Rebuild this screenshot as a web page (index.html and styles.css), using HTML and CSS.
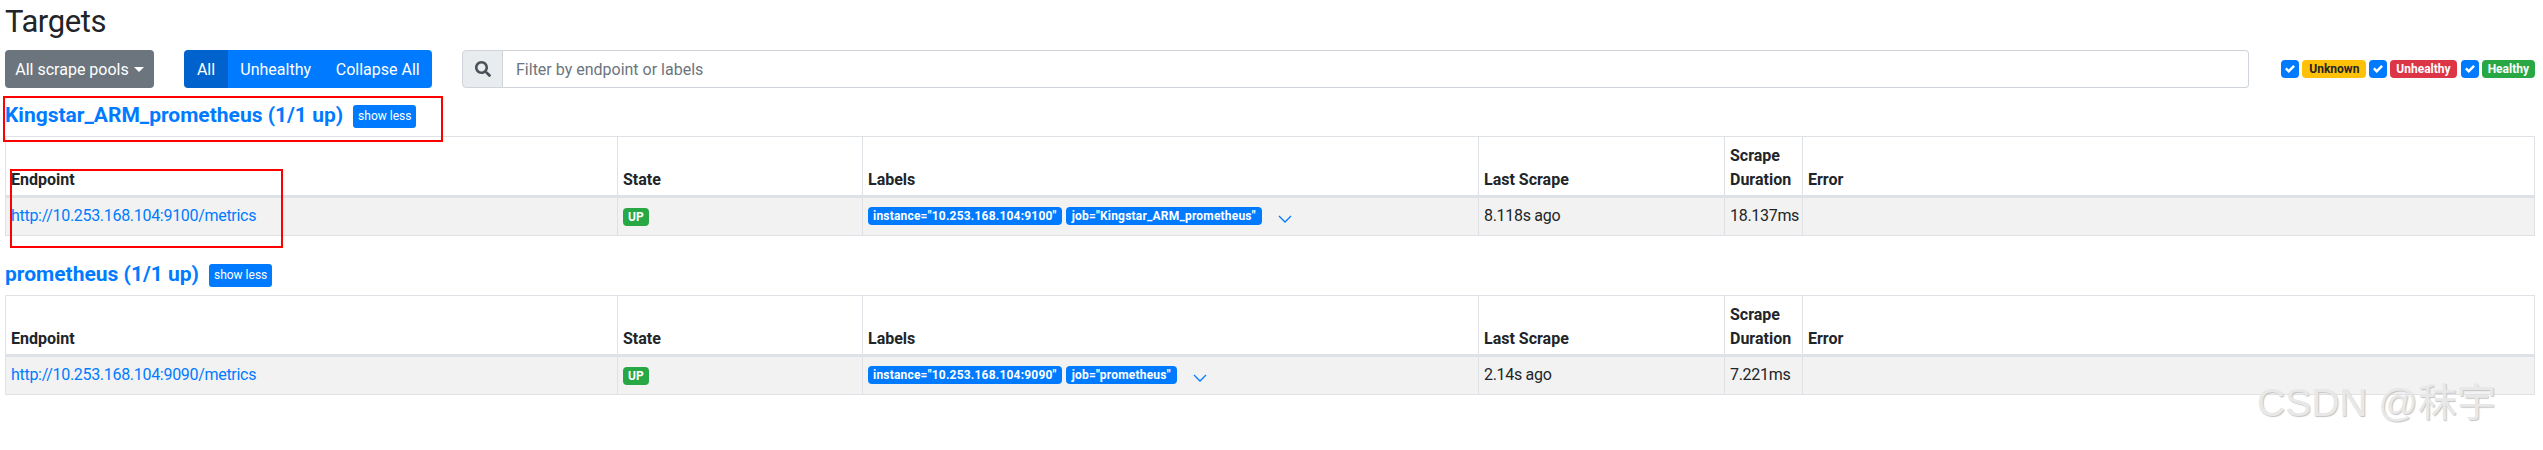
FILE: index.html
```html
<!DOCTYPE html>
<html lang="en">
<head>
<meta charset="utf-8">
<title>Targets</title>
<link rel="stylesheet" href="styles.css">
</head>
<body>
<main class="page">
  <h1 class="title">Targets</h1>
  <div class="toolbar">
    <button class="btn btn-grey">All scrape pools<span class="caret"></span></button>
    <div class="btn-group">
      <button class="btn btn-blue btn-active">All</button>
      <button class="btn btn-blue">Unhealthy</button>
      <button class="btn btn-blue">Collapse All</button>
    </div>
    <div class="search">
      <span class="search-icon">
        <svg width="16" height="16" viewBox="0 0 512 512"><path fill="#495057" d="M505 442.700L405.300 343c-4.500-4.500-10.600-7-17-7H372c27.600-35.300 44-79.700 44-128C416 93.100 322.900 0 208 0S0 93.100 0 208s93.100 208 208 208c48.300 0 92.700-16.400 128-44v16.300c0 6.400 2.500 12.500 7 17l99.700 99.700c9.400 9.400 24.600 9.400 33.900 0l28.300-28.300c9.400-9.400 9.400-24.600.1-34zM208 336c-70.700 0-128-57.200-128-128 0-70.700 57.200-128 128-128 70.700 0 128 57.200 128 128 0 70.700-57.200 128-128 128z"/></svg>
      </span>
      <input class="search-input" type="text" placeholder="Filter by endpoint or labels">
    </div>
    <div class="filters">
      <span class="check"><svg width="10" height="10" viewBox="0 0 8 8"><path fill="#fff" d="M6.564.750l-3.590 3.612-1.538-1.550L0 4.260l2.974 2.990L8 2.193z"/></svg></span>
      <span class="pill pill-yellow">Unknown</span>
      <span class="check"><svg width="10" height="10" viewBox="0 0 8 8"><path fill="#fff" d="M6.564.750l-3.590 3.612-1.538-1.550L0 4.260l2.974 2.990L8 2.193z"/></svg></span>
      <span class="pill pill-red">Unhealthy</span>
      <span class="check"><svg width="10" height="10" viewBox="0 0 8 8"><path fill="#fff" d="M6.564.750l-3.590 3.612-1.538-1.550L0 4.260l2.974 2.990L8 2.193z"/></svg></span>
      <span class="pill pill-green">Healthy</span>
    </div>
  </div>

  <section class="pool pool-first">
    <div class="pool-head">
      <a class="pool-link" href="#a">Kingstar_ARM_prometheus (1/1 up)</a>
      <button class="show-less">show less</button>
    </div>
    <table class="targets">
      <colgroup><col class="c-end"><col class="c-state"><col class="c-labels"><col class="c-last"><col class="c-dur"><col></colgroup>
      <thead><tr><th>Endpoint</th><th>State</th><th>Labels</th><th>Last Scrape</th><th>Scrape Duration</th><th>Error</th></tr></thead>
      <tbody><tr>
        <td><a class="ep" href="#a">http://10.253.168.104:9100/metrics</a></td>
        <td><span class="pill pill-green up">UP</span></td>
        <td><div class="labels"><span class="pill pill-blue">instance="10.253.168.104:9100"</span><span class="pill pill-blue pill-job">job="Kingstar_ARM_prometheus"</span><svg class="chev" width="14" height="8" viewBox="0 0 14 8"><path d="M1 1l6 6 6-6" fill="none" stroke="#007bff" stroke-width="1.300"/></svg></div></td>
        <td>8.118s ago</td><td>18.137ms</td><td></td>
      </tr></tbody>
    </table>
  </section>

  <section class="pool">
    <div class="pool-head">
      <a class="pool-link" href="#b">prometheus (1/1 up)</a>
      <button class="show-less">show less</button>
    </div>
    <table class="targets">
      <colgroup><col class="c-end"><col class="c-state"><col class="c-labels"><col class="c-last"><col class="c-dur"><col></colgroup>
      <thead><tr><th>Endpoint</th><th>State</th><th>Labels</th><th>Last Scrape</th><th>Scrape Duration</th><th>Error</th></tr></thead>
      <tbody><tr>
        <td><a class="ep" href="#b">http://10.253.168.104:9090/metrics</a></td>
        <td><span class="pill pill-green up">UP</span></td>
        <td><div class="labels"><span class="pill pill-blue">instance="10.253.168.104:9090"</span><span class="pill pill-blue pill-job">job="prometheus"</span><svg class="chev" width="14" height="8" viewBox="0 0 14 8"><path d="M1 1l6 6 6-6" fill="none" stroke="#007bff" stroke-width="1.300"/></svg></div></td>
        <td>2.14s ago</td><td>7.221ms</td><td></td>
      </tr></tbody>
    </table>
  </section>
</main>
<div class="mark mark-pool"></div>
<div class="mark mark-endpoint"></div>
<div class="watermark">CSDN @秣宇</div>
</body>
</html>
```
FILE: styles.css
```css
* { box-sizing: border-box; }
html, body { margin: 0; background: #fff; }
body {
  position: relative;
  height: 450px;
  overflow: hidden;
  font-family: Roboto, "Noto Sans", "Liberation Sans", sans-serif;
  font-size: 16px;
  line-height: 24px;
  color: #212529;
}
.page { padding: 0 8px 0 5px; }
.title { margin: 0; height: 50px; font-size: 31px; line-height: 44px; font-weight: 400; letter-spacing: -0.4px; }
.toolbar { display: flex; align-items: center; height: 38px; }
.btn { height: 38px; border: 0; padding: 2px 13px 0; font: inherit; color: #fff; border-radius: 4px; }
.btn-grey { background: #6c757d; width: 149px; padding: 2px 0 0; }
.caret {
  display: inline-block; margin-left: 5px; vertical-align: 3px;
  border-top: 5px solid #fff; border-left: 5px solid transparent; border-right: 5px solid transparent;
}
.btn-group { display: flex; width: 248px; margin-left: 30px; border-radius: 4px; overflow: hidden; }
.btn-blue { flex: 1 1 auto; background: #007bff; border-radius: 0; padding: 2px 12px 0; }
.btn-active { flex: none; width: 44px; padding: 2px 0 0; background: #0062cc; }
.search { display: flex; margin-left: 30px; width: 1787px; height: 38px; }
.search-icon {
  display: flex; align-items: center; justify-content: center; flex: none; width: 41px;
  background: #e9ecef; border: 1px solid #ced4da; border-radius: 4px 0 0 4px;
}
.search-input {
  flex: 1; min-width: 0; border: 1px solid #ced4da; border-left: 0; border-radius: 0 4px 4px 0;
  padding: 2px 13px 0; font: inherit; color: #495057; outline: 0;
}
.search-input::placeholder { color: #6c757d; opacity: 1; }
.filters { display: flex; align-items: center; margin-left: auto; }
.check {
  display: flex; align-items: center; justify-content: center;
  width: 18px; height: 18px; background: #007bff; border-radius: 4px; margin-right: 3px;
}
.pill {
  display: inline-block; height: 18px; padding: 0 6px; border-radius: 4px;
  font-size: 12px; font-weight: 700; line-height: 18px; white-space: nowrap; letter-spacing: 0;
}
.pill-yellow { background: #ffc107; color: #212529; margin-right: 3px; padding: 0 7px; }
.pill-red { background: #dc3545; color: #fff; margin-right: 4px; }
.pill-green { background: #28a745; color: #fff; }
.pill-blue { background: #007bff; color: #fff; padding: 0 5px; letter-spacing: .2px; }
.pill-job { padding: 0 6px; }
.up { padding: 0 5px; }
.pool-first { margin-top: 8px; }
.pool + .pool { margin-top: 19px; }
.pool-head { display: flex; align-items: center; height: 40px; padding-bottom: 3px; }
.pool-link { font-size: 21px; font-weight: 700; color: #007bff; text-decoration: none; }
.show-less {
  height: 23px; margin: 3px 0 0 10px; padding: 0 5px; border: 0; border-radius: 3px;
  background: #007bff; color: #fff; font: inherit; font-size: 12px; line-height: 23px;
}
.targets { width: 100%; table-layout: fixed; border-collapse: collapse; border: 1px solid #dee2e6; }
.c-end { width: 612px; }
.c-state { width: 245px; }
.c-labels { width: 616px; }
.c-last { width: 246px; }
.c-dur { width: 78px; }
.targets th, .targets td { border: 1px solid #dee2e6; padding: 7px 5px 3px; text-align: left; vertical-align: bottom; }
.targets th { font-weight: 700; border-bottom-width: 3px; }
.targets td { height: 39px; vertical-align: middle; background: #f2f2f2; padding-top: 3px; padding-bottom: 5px; letter-spacing: -0.3px; }
.ep { color: #007bff; text-decoration: none; }
.labels { display: flex; align-items: center; gap: 4px; }
.chev { margin-left: 12px; margin-top: 6px; }
.mark { position: absolute; border: 2px solid #f00; }
.mark-pool { left: 3px; top: 96px; width: 440px; height: 46px; }
.mark-endpoint { left: 10px; top: 169px; width: 273px; height: 79px; }
.watermark {
  position: absolute; left: 2257px; top: 375px; white-space: nowrap;
  font-family: "Liberation Sans", "Noto Sans CJK SC", sans-serif; font-size: 39px; line-height: 56px;
  color: #e8e8e8; text-shadow: 1px 1px 1px #c4c4c4;
}
```
